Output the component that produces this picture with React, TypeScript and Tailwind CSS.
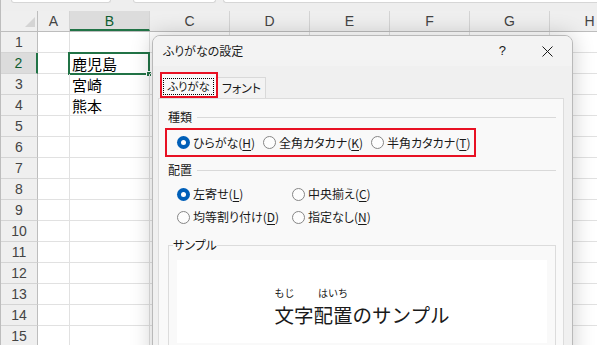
import React from "react";

const COLS = [
  { name: "A", w: "w-[32px]" },
  { name: "B", w: "w-[80px]" },
  { name: "C", w: "w-[80px]" },
  { name: "D", w: "w-[80px]" },
  { name: "E", w: "w-[80px]" },
  { name: "F", w: "w-[80px]" },
  { name: "G", w: "w-[80px]" },
  { name: "H", w: "w-[80px]" },
];

const DATA: Record<number, string> = { 2: "鹿児島", 3: "宮崎", 4: "熊本" };

function Radio({ checked }: { checked?: boolean }) {
  return checked ? (
    <span className="flex h-[13px] w-[13px] shrink-0 items-center justify-center rounded-full bg-[#005fb8]">
      <span className="h-[5px] w-[5px] rounded-full bg-white" />
    </span>
  ) : (
    <span className="h-[13px] w-[13px] shrink-0 rounded-full border border-[#868686] bg-[#fdfdfd]" />
  );
}

function Opt({ label, k, checked, w }: { label: string; k: string; checked?: boolean; w: string }) {
  return (
    <div className={`flex items-center gap-[3px] ${w}`}>
      <Radio checked={checked} />
      <span className="whitespace-nowrap">
        {label}(<span className="underline underline-offset-[2px]">{k}</span>)
      </span>
    </div>
  );
}

function Section({ label }: { label: string }) {
  return (
    <div className="flex h-[14px] items-center pl-[9px] pr-[7px]">
      <span className="leading-[14px]">{label}</span>
      <div className="ml-[5px] h-px flex-1 bg-[#d9d9d9]" />
    </div>
  );
}

export default function App() {
  const jp = "font-['Noto_Sans_CJK_JP',sans-serif]";
  return (
    <div className="relative h-[345px] w-[597px] overflow-hidden bg-white">
      {/* top strip */}
      <div className="flex h-[11px] items-start border-l border-[#bdbdbd] bg-[#eeeeee]">
        <div className="ml-[10px] h-[3px] w-[100px] rounded-b-[3px] border border-t-0 border-[#d6d6d6] bg-white" />
        <div className="ml-[22px] h-[3px] w-[83px] rounded-b-[3px] border border-t-0 border-[#d6d6d6] bg-white" />
        <div className="ml-[7px] h-[3px] flex-1 rounded-bl-[3px] border border-t-0 border-r-0 border-[#d6d6d6] bg-white" />
      </div>
      {/* header row */}
      <div className="flex h-[21px] border-b border-l border-[#bdbdbd] bg-[#efefef] font-['Liberation_Sans',sans-serif] text-[14px] text-[#444]">
        <div className="relative w-[37px] shrink-0 border-r border-[#bdbdbd]">
          <svg className="absolute left-[24px] top-[6px]" width="10" height="10" viewBox="0 0 10 10">
            <polygon points="10,0 10,10 0,10" fill="#d4d4d4" />
          </svg>
        </div>
        {COLS.map((c) =>
          c.name === "B" ? (
            <div
              key={c.name}
              className={`${c.w} flex shrink-0 items-center justify-center border-b-2 border-r border-b-[#217346] border-r-[#d4d4d4] bg-[#dcdcdc] pt-[2px] text-[#0e5c2f]`}
            >
              {c.name}
            </div>
          ) : (
            <div key={c.name} className={`${c.w} flex shrink-0 items-center justify-center border-r border-[#d4d4d4]`}>
              {c.name}
            </div>
          )
        )}
      </div>
      {/* rows */}
      {Array.from({ length: 15 }, (_, i) => i + 1).map((r) => (
        <div key={r} className="flex h-[21px] border-l border-[#bdbdbd]">
          <div
            className={`flex w-[37px] shrink-0 items-center justify-center border-b font-['Liberation_Sans',sans-serif] text-[14px] ${
              r === 2
                ? "border-r-2 border-b-[#d4d4d4] border-r-[#217346] bg-[#dcdcdc] text-[#0e5c2f]"
                : "border-r border-[#d4d4d4] border-r-[#bdbdbd] bg-[#efefef] text-[#444]"
            }`}
          >
            {r}
          </div>
          {COLS.map((c) => (
            <div
              key={c.name}
              className={`${c.w} relative flex shrink-0 items-center border-b border-r border-[#e1e1e1] pl-[2px] ${jp} text-[15px] text-black`}
            >
              {c.name === "B" && DATA[r] ? <span className="leading-none">{DATA[r]}</span> : null}
              {c.name === "B" && r === 2 ? (
                <div className="absolute -left-[2px] -top-[1px] h-[23px] w-[82px] border-2 border-[#217346]">
                  <div className="absolute -bottom-[4px] -right-[4px] h-[6px] w-[6px] border border-white bg-[#217346]" />
                </div>
              ) : null}
            </div>
          ))}
        </div>
      ))}

      {/* dialog */}
      <div
        className={`absolute left-[152px] top-[35px] h-[330px] w-[421px] overflow-hidden rounded-t-[8px] border border-[#b9b9b9] bg-[#f0f0f0] shadow-[0_0_22px_rgba(0,0,0,0.2)] ${jp} text-[12px] text-[#1a1a1a] [font-feature-settings:'palt']`}
      >
        {/* title bar */}
        <div className="flex h-[30px] items-center bg-[#f3f3f3] pl-[10px]">
          <span className="flex-1">ふりがなの設定</span>
          <span className="mr-[36px] font-['Liberation_Sans',sans-serif] text-[13px]">?</span>
          <svg className="mr-[19px]" width="11" height="11" viewBox="0 0 11 11">
            <path d="M0.5 0.5 L10.5 10.5 M10.5 0.5 L0.5 10.5" stroke="#1a1a1a" strokeWidth="1" />
          </svg>
        </div>
        <div className="pl-[5px] pr-[8px]">
          {/* tabs */}
          <div className="flex h-[32px] items-end pl-[2px]">
            <div className="relative h-[26px] w-[58px] border-2 border-[#e81123] bg-[#f9f9f9]">
              <div className="ml-[1px] mt-[4px] flex h-[17px] w-[51px] items-center justify-center border border-dotted border-black text-[11.5px] tracking-[-0.2px]">
                ふりがな
              </div>
            </div>
            <div className="flex h-[21px] w-[48px] items-center justify-center border border-b-0 border-l-0 border-[#d9d9d9] bg-[#f3f3f3]">
              フォント
            </div>
          </div>
          {/* panel */}
          <div className="h-[260px] border border-[#dcdcdc] bg-[#f9f9f9]">
            <div className="mt-[11px]">
              <Section label="種類" />
            </div>
            <div className="ml-[6px] mt-[4px] flex h-[29px] w-[311px] items-center border-2 border-[#e81123] pl-[10px]">
              <Opt label="ひらがな" k="H" checked w="w-[86px]" />
              <Opt label="全角カタカナ" k="K" w="w-[108px]" />
              <Opt label="半角カタカナ" k="T" w="w-[100px]" />
            </div>
            <div className="mt-[6px]">
              <Section label="配置" />
            </div>
            <div className="mt-[7px] grid grid-cols-[115px_1fr] gap-y-[3px] pl-[18px]">
              <div className="flex h-[20px] items-center">
                <Opt label="左寄せ" k="L" checked w="w-[115px]" />
              </div>
              <div className="flex h-[20px] items-center">
                <Opt label="中央揃え" k="C" w="w-[110px]" />
              </div>
              <div className="flex h-[20px] items-center">
                <Opt label="均等割り付け" k="D" w="w-[115px]" />
              </div>
              <div className="flex h-[20px] items-center">
                <Opt label="指定なし" k="N" w="w-[110px]" />
              </div>
            </div>
            <fieldset className="ml-[9px] mr-[7px] mt-[11px] h-[120px] border border-[#dcdcdc] p-0">
              <legend className="ml-[4px] px-0 leading-[14px]">サンプル</legend>
              <div className="mx-[8px] mt-[8px] flex h-[83px] justify-center bg-white pt-[27px]">
                <div className="flex flex-col [font-feature-settings:normal]">
                  <div className="flex h-[12px] text-[10px] leading-[12px]">
                    <span className="w-[39px] text-left">もじ</span>
                    <span className="w-[39px] text-center">はいち</span>
                  </div>
                  <div className="mt-[5px] text-[19.5px] leading-[22px]">文字配置のサンプル</div>
                </div>
              </div>
            </fieldset>
          </div>
        </div>
      </div>
    </div>
  );
}
